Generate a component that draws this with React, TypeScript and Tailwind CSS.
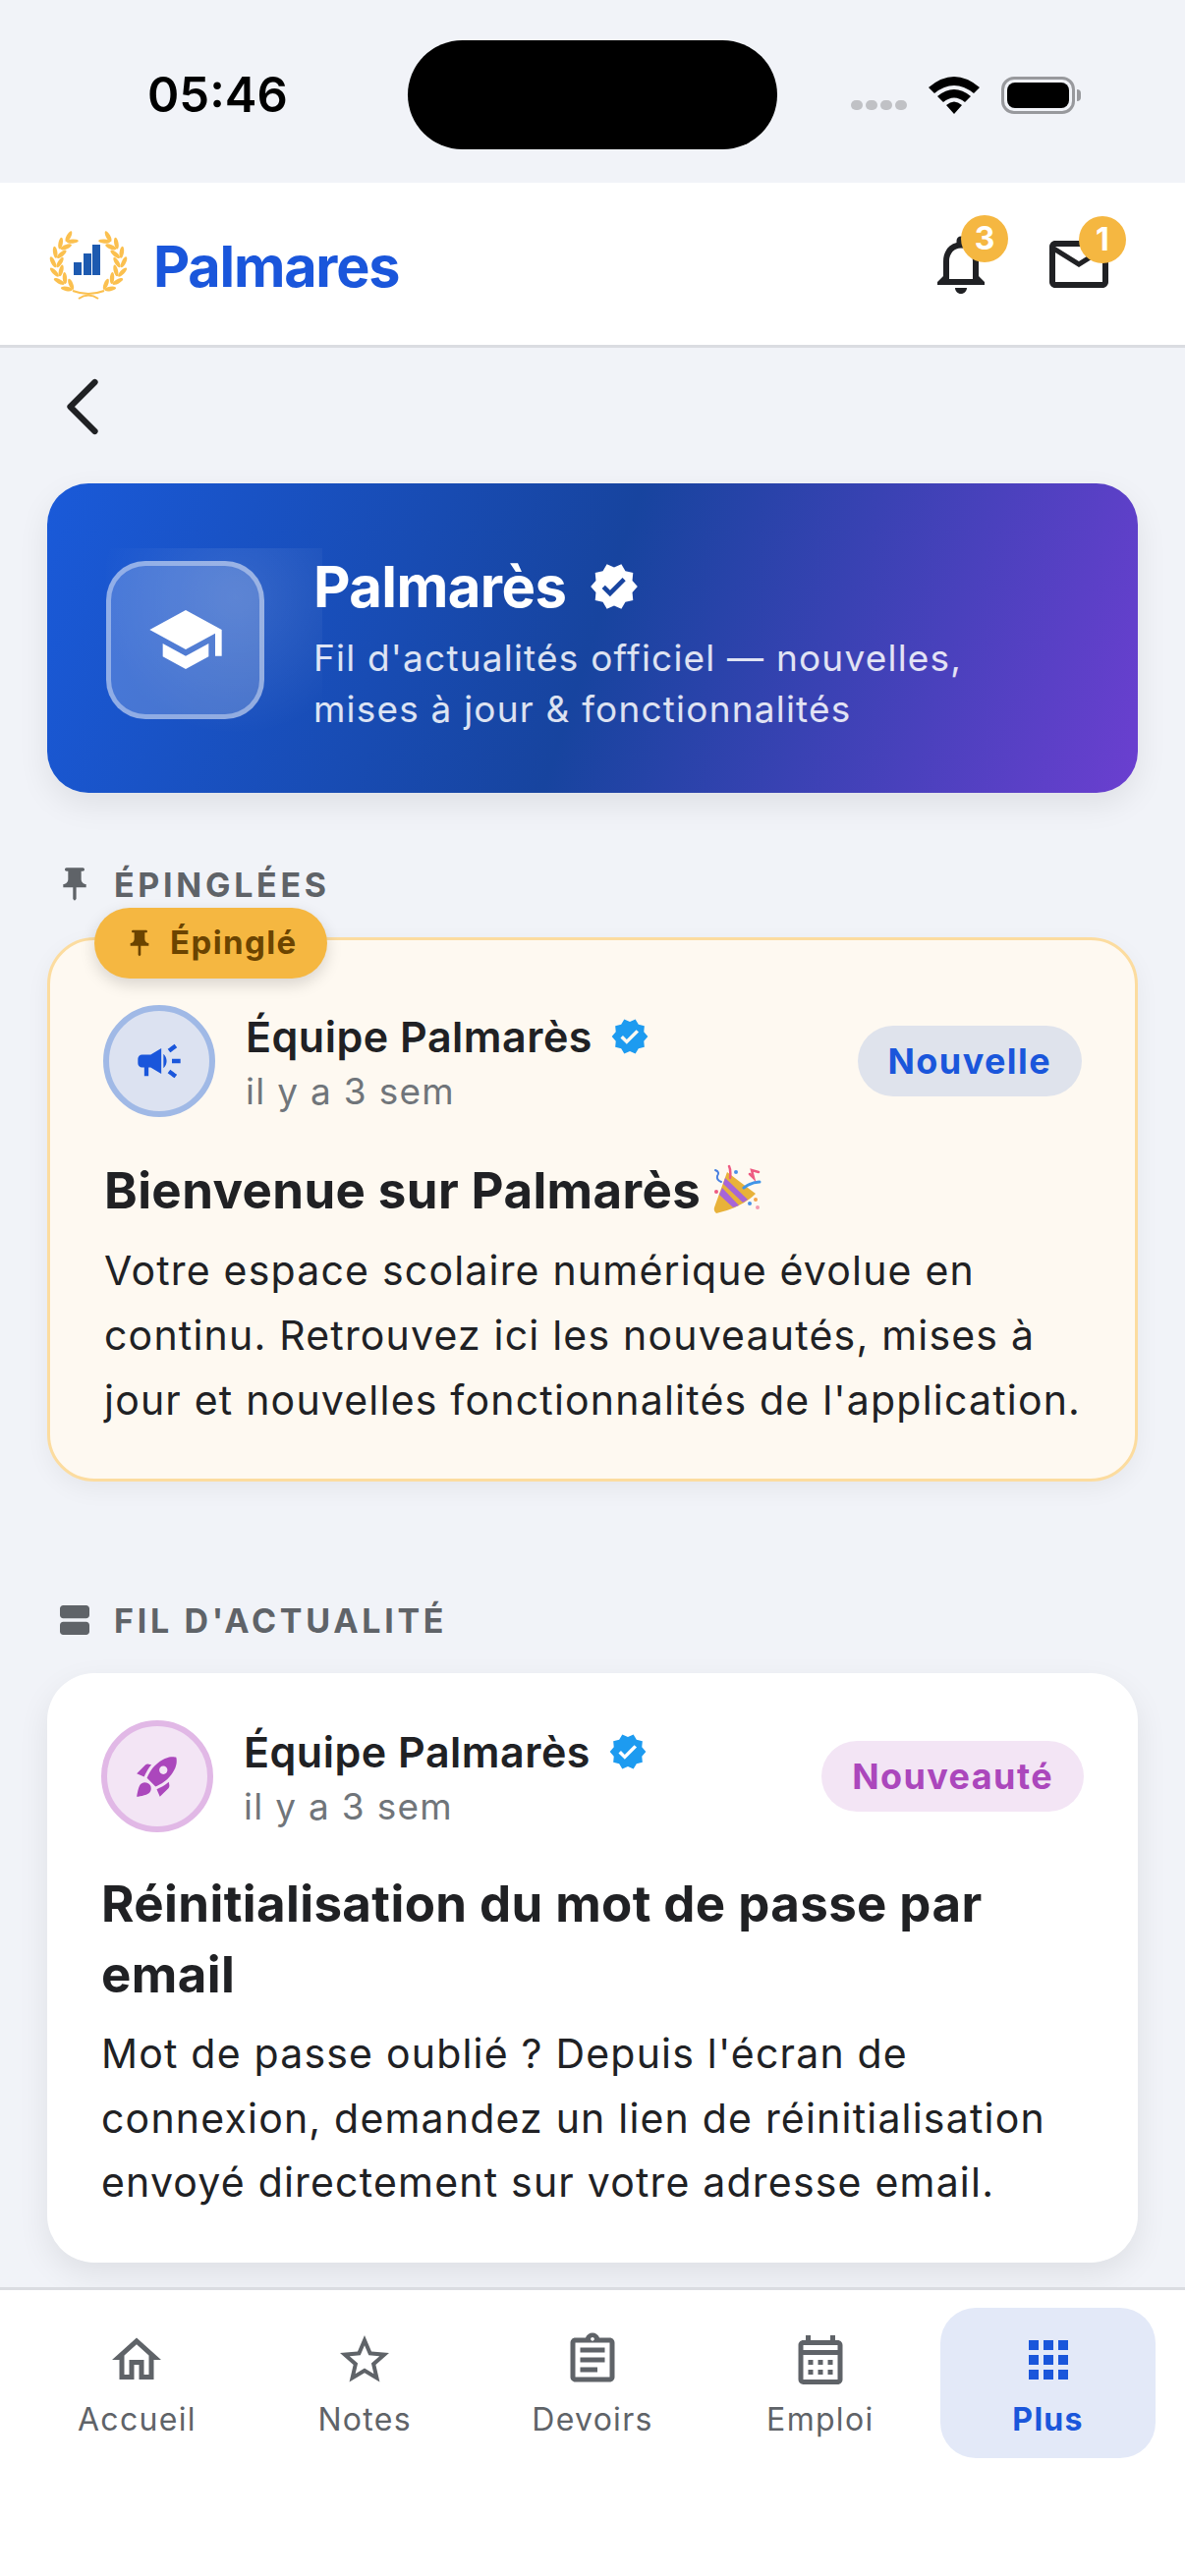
import {
  MdApps,
  MdCampaign,
  MdOutlineAssignment,
  MdOutlineCalendarMonth,
  MdOutlineHome,
  MdOutlineMailOutline,
  MdOutlineNotifications,
  MdPushPin,
  MdRocketLaunch,
  MdSchool,
  MdStarBorder,
  MdVerified,
  MdViewAgenda,
} from "react-icons/md";
import { LuChevronLeft } from "react-icons/lu";
import type { ReactNode } from "react";

const tabs = [
  { label: "Accueil", icon: <MdOutlineHome size={60} /> },
  { label: "Notes", icon: <MdStarBorder size={60} /> },
  { label: "Devoirs", icon: <MdOutlineAssignment size={60} /> },
  { label: "Emploi", icon: <MdOutlineCalendarMonth size={60} /> },
  { label: "Plus", icon: <MdApps size={60} />, active: true },
];

// leaves of the laurel, placed along an arc (left branch, mirrored for the right)
const leafAngles = [128, 146, 164, 182, 200, 218, 236];
const leaves = leafAngles.flatMap((a) => {
  const rad = (a * Math.PI) / 180;
  return [
    { x: 40 + 36 * Math.cos(rad), y: 35 + 33 * Math.sin(rad), r: a - 180 - 28 },
    { x: 40 + 29 * Math.cos(rad), y: 35 + 27 * Math.sin(rad), r: a - 180 + 30 },
  ];
});

function Wreath() {
  return (
    <svg width="80" height="72" viewBox="0 0 80 72" className="shrink-0">
      {leaves.map(({ x, y, r }, i) => (
        <g key={i} fill="#fbc04f">
          <ellipse cx={x} cy={y} rx="2.2" ry="6" transform={`rotate(${r} ${x} ${y})`} />
          <ellipse cx={80 - x} cy={y} rx="2.2" ry="6" transform={`rotate(${-r} ${80 - x} ${y})`} />
        </g>
      ))}
      <path d="M24 63 Q40 69 56 63 M30 71 Q40 64 50 71" fill="none" stroke="#fbc04f" strokeWidth="2" />
      <rect x="25" y="34" width="8" height="13" fill="#1d5ab0" />
      <rect x="35" y="25" width="8" height="22" fill="#1d5ab0" />
      <rect x="44" y="16" width="8" height="31" fill="#1d5ab0" />
    </svg>
  );
}

function Popper() {
  return (
    <svg width="54" height="54" viewBox="0 0 54 54" className="ml-[12px] shrink-0">
      <path d="M15 8 L44 30 Q30 44 4 50 Q1 48 2 44 Z" fill="#e8b23a" />
      <path d="M10 24 L27 42 L21 44 L7 31 Z" fill="#a765d8" />
      <path d="M13 14 L36 36 L31 39 L11 20 Z" fill="#a765d8" />
      <path d="M32 24 Q40 18 48 18" fill="none" stroke="#3f95e8" strokeWidth="3" strokeLinecap="round" />
      <path d="M18 14 Q19 6 17 2 M38 10 L42 14 L40 6 L47 8" fill="none" stroke="#ee5a82" strokeWidth="2.5" strokeLinecap="round" />
      <path d="M3 6 Q8 8 5 12 Q4 16 9 18" fill="none" stroke="#4a80e0" strokeWidth="2" strokeLinecap="round" />
      <circle cx="24" cy="8" r="2" fill="#4a90e8" />
      <circle cx="44" cy="36" r="2" fill="#f4a64e" />
      <circle cx="38" cy="40" r="2" fill="#4a90e8" />
      <circle cx="46" cy="44" r="2" fill="#f49ab0" />
      <circle cx="4" cy="28" r="2" fill="#ee5a82" />
    </svg>
  );
}

function CardHeader({
  avatar,
  pill,
  pillClass,
  avatarClass,
}: {
  avatar: ReactNode;
  pill: string;
  pillClass: string;
  avatarClass: string;
}) {
  return (
    <div className="flex items-center">
      <div className={`flex size-[114px] shrink-0 items-center justify-center rounded-full border-[6px] ${avatarClass}`}>
        {avatar}
      </div>
      <div className="ml-[31px] flex-1 pt-[4px]">
        <div className="flex items-center text-[43px] leading-[56px] font-semibold tracking-[0.5px] text-[#202124]">
          Équipe Palmarès
          <MdVerified size={40} className="ml-[18px] text-[#1d9bf0]" />
        </div>
        <div className="mt-[2px] text-[37px] leading-[52px] tracking-[1.3px] text-[#70757a]">il y a 3 sem</div>
      </div>
      <div className={`flex h-[72px] items-center rounded-full px-[31px] text-[36px] font-bold tracking-[1.4px] ${pillClass}`}>
        {pill}
      </div>
    </div>
  );
}

export default function App() {
  return (
    <div className="flex h-[2622px] w-[1206px] flex-col overflow-hidden bg-[#f1f3f8] font-['Inter',sans-serif]">
      {/* status bar */}
      <div className="relative flex h-[186px] shrink-0 items-start justify-between pt-[67px] pr-[106px] pl-[150px]">
        <span className="text-[49px] leading-[60px] font-semibold text-black">05:46</span>
        <div className="absolute top-[41px] left-[415px] h-[111px] w-[376px] rounded-[56px] bg-black" />
        <div className="flex items-center pt-[11px]">
          <div className="mt-[20px] flex gap-[3px]">
            {[0, 1, 2, 3].map((i) => (
              <span key={i} className="h-[10px] w-[12px] rounded-full bg-[#c0c1c5]" />
            ))}
          </div>
          <svg width="52" height="38" viewBox="0 0 52 38" className="ml-[22px]">
            <path d="M0 11 Q26 -11 52 11 L46 17 Q26 1 6 17 Z M9 20 Q26 6 43 20 L37 26 Q26 17 15 26 Z M18 29 Q26 22 34 29 L26 38 Z" fill="#000" />
          </svg>
          <div className="ml-[22px] flex h-[38px] w-[75px] items-center rounded-[13px] border-[3px] border-[#98999d] p-[3px]">
            <div className="h-full w-full rounded-[8px] bg-black" />
          </div>
          <div className="ml-[2px] h-[12px] w-[4px] rounded-r-full bg-[#98999d]" />
        </div>
      </div>

      {/* header */}
      <header className="flex h-[168px] shrink-0 items-center justify-between border-b-[3px] border-[#dadce1] bg-white pr-[72px] pl-[50px]">
        <div className="flex items-center gap-[26px]">
          <Wreath />
          <span className="mt-[6px] text-[57.5px] font-bold tracking-[-1.2px] text-[#1a56db]">Palmares</span>
        </div>
        <div className="flex items-center gap-[48px] text-[#202124]">
          <div className="relative size-[72px]">
            <MdOutlineNotifications size={72} />
            <span className="absolute top-[-14px] left-[36px] flex size-[48px] items-center justify-center rounded-full bg-[#f5b741] text-[32px] font-bold text-white">3</span>
          </div>
          <div className="relative size-[72px]">
            <MdOutlineMailOutline size={72} />
            <span className="absolute top-[-13px] left-[36px] flex size-[48px] items-center justify-center rounded-full bg-[#f5b741] text-[32px] font-bold text-white">1</span>
          </div>
        </div>
      </header>

      {/* feed */}
      <main className="flex-1 overflow-hidden px-[48px]">
        <LuChevronLeft size={100} strokeWidth={1.5} className="mt-[10px] ml-[-14px] text-[#202124]" />

        <section className="relative mt-[28px] flex h-[315px] items-center overflow-hidden rounded-[42px] bg-[linear-gradient(108deg,#1a5ad9_0%,#17449f_50%,#6b3fd0_100%)] pl-[60px] shadow-[0_12px_32px_rgba(0,0,0,0.08)]">
          <div className="absolute top-[66px] left-[60px] h-[200px] w-[220px] bg-[radial-gradient(circle_at_60%_25%,rgba(255,255,255,0.12),rgba(255,255,255,0)_70%)]" />
          <div className="relative mt-[3px] flex size-[161px] shrink-0 items-center justify-center rounded-[40px] border-[5px] border-white/40 bg-white/20">
            <MdSchool size={80} className="text-white" />
          </div>
          <div className="relative ml-[50px] pt-[10px]">
            <div className="flex items-center text-[58px] leading-[70px] font-bold tracking-[-0.6px] text-white">
              Palmarès
              <MdVerified size={52} className="ml-[23px]" />
            </div>
            <p className="mt-[12px] text-[37px] leading-[52px] tracking-[1.2px] text-white/85">
              Fil d'actualités officiel — nouvelles,
              <br />
              mises à jour &amp; fonctionnalités
            </p>
          </div>
        </section>

        <h2 className="mt-[70px] flex h-[46px] items-center text-[34px] font-bold tracking-[3.7px] text-[#5f6368]">
          <MdPushPin size={40} className="mr-[20px] ml-[8px]" />
          ÉPINGLÉES
        </h2>

        <article className="relative mt-[31px] h-[554px] rounded-[48px] border-[3px] border-[#fcdc9f] bg-[#fef9f1] pt-[66px] pr-[54px] pl-[55px] shadow-[0_8px_24px_rgba(0,0,0,0.05)]">
          <div className="absolute top-[-33px] left-[45px] flex h-[72px] w-[237px] items-center rounded-full bg-[#f5b741] pl-[30px] text-[33px] font-bold tracking-[1.4px] text-[#6b4400] shadow-[0_6px_16px_rgba(0,0,0,0.15)]">
            <MdPushPin size={32} className="mr-[15px]" />
            Épinglé
          </div>
          <div className="ml-[-1px]">
            <CardHeader
              avatar={<MdCampaign size={52} className="text-[#1a56db]" />}
              avatarClass="border-[#a0b9e6] bg-[#dce2f1]"
              pill="Nouvelle"
              pillClass="bg-[#dfe3ec] text-[#1a56db]"
            />
          </div>
          <h3 className="mt-[39px] flex items-center text-[51px] leading-[72px] font-bold tracking-[0.4px] text-[#202124]">
            Bienvenue sur Palmarès
            <Popper />
          </h3>
          <p className="mt-[12px] text-[41px] leading-[66px] tracking-[1.2px] text-[#202124]">
            Votre espace scolaire numérique évolue en continu. Retrouvez ici les nouveautés, mises à jour et nouvelles fonctionnalités de l'application.
          </p>
        </article>

        <h2 className="mt-[118px] flex h-[46px] items-center text-[34px] font-bold tracking-[3.7px] text-[#5f6368]">
          <MdViewAgenda size={40} className="mr-[20px] ml-[8px]" />
          FIL D'ACTUALITÉ
        </h2>

        <article className="mt-[31px] h-[600px] rounded-[48px] bg-white px-[55px] pt-[48px] shadow-[0_12px_32px_rgba(0,0,0,0.08)]">
          <CardHeader
            avatar={<MdRocketLaunch size={50} className="text-[#ab47bc]" />}
            avatarClass="border-[#e1b8e6] bg-[#f3e5f5]"
            pill="Nouveauté"
            pillClass="bg-[#f3e5f5] text-[#ab47bc]"
          />
          <h3 className="mt-[37px] text-[51px] leading-[72px] font-bold tracking-[0.4px] text-[#202124]">
            Réinitialisation du mot de passe par email
          </h3>
          <p className="mt-[12px] text-[41px] leading-[65.5px] tracking-[1.2px] text-[#202124]">
            Mot de passe oublié ? Depuis l'écran de connexion, demandez un lien de réinitialisation envoyé directement sur votre adresse email.
          </p>
        </article>
      </main>

      {/* tab bar */}
      <nav className="flex h-[294px] shrink-0 items-start gap-[13px] border-t-[3px] border-[#dadce1] bg-white px-[30px] pt-[18px]">
        {tabs.map((tab) => (
          <div
            key={tab.label}
            className={`flex h-[153px] flex-1 flex-col items-center rounded-[36px] pt-[23px] ${tab.active ? "bg-[#e3e9f8] text-[#1a56db]" : "text-[#5f6368]"}`}
          >
            {tab.icon}
            <span className={`mt-[9px] text-[32px] leading-[44px] tracking-[1.3px] ${tab.active ? "font-bold" : "font-normal"}`}>
              {tab.label}
            </span>
          </div>
        ))}
      </nav>
    </div>
  );
}
